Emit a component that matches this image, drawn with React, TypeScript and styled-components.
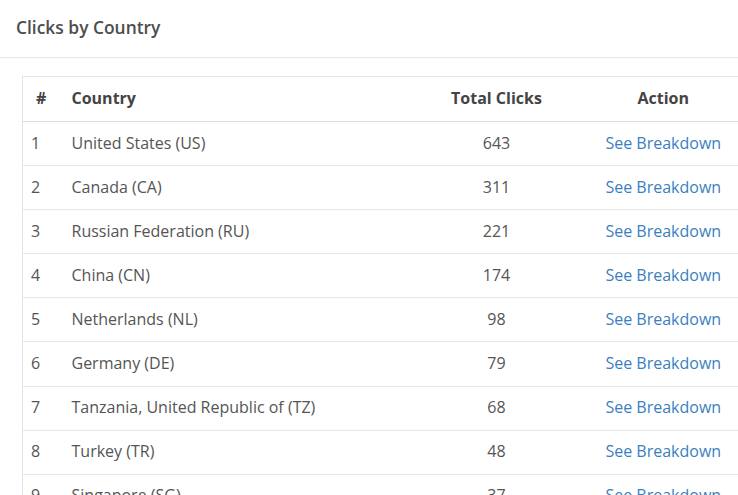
import React from "react";
import styled, { createGlobalStyle } from "styled-components";

const Global = createGlobalStyle`
  html, body { margin: 0; padding: 0; background: #fff; overflow: hidden; }
  body { font-family: "Open Sans", "Liberation Sans", sans-serif; color: #555; }
`;

const Panel = styled.div`
  width: 738px;
  height: 495px;
  overflow: hidden;
`;

const PanelHeader = styled.div`
  height: 58px;
  box-sizing: border-box;
  border-bottom: 1px solid #e6e6e6;
  padding: 0 16px;
  display: flex;
  align-items: center;
`;

const Title = styled.h3`
  margin: 0;
  font-size: 17.4px;
  font-weight: 600;
  color: #4d4d4d;
  padding-bottom: 4px;
`;

const Body = styled.div`
  padding: 18px 0 0 22px;
`;

const Table = styled.table`
  width: 732px;
  border-collapse: collapse;
  border: 1px solid #e4e4e4;
  font-size: 16px;
  table-layout: fixed;
`;

const Th = styled.th<{ $align?: string; $first?: boolean }>`
  text-align: ${(p) => p.$align || "left"};
  font-weight: 700;
  color: #444;
  height: 45px;
  padding: 0 8px 3px ${(p) => (p.$first ? "13px" : "8px")};
  border-bottom: 1px solid #ddd;
  box-sizing: border-box;
`;

const Td = styled.td<{ $align?: string }>`
  text-align: ${(p) => p.$align || "left"};
  height: 41.1px;
  padding: 0 8px 2px 8px;
  border-top: 1px solid #e6e6e6;
  color: #555;
  white-space: nowrap;
`;

const Link = styled.a`
  color: #3a7fc1;
  text-decoration: none;
`;

const rows: [string, number][] = [
  ["United States (US)", 643],
  ["Canada (CA)", 311],
  ["Russian Federation (RU)", 221],
  ["China (CN)", 174],
  ["Netherlands (NL)", 98],
  ["Germany (DE)", 79],
  ["Tanzania, United Republic of (TZ)", 68],
  ["Turkey (TR)", 48],
  ["Singapore (SG)", 37],
];

export default function App() {
  return (
    <Panel>
      <Global />
      <PanelHeader>
        <Title>Clicks by Country</Title>
      </PanelHeader>
      <Body>
        <Table>
          <colgroup>
            <col style={{ width: 41 }} />
            <col style={{ width: 357 }} />
            <col style={{ width: 152 }} />
            <col style={{ width: 182 }} />
          </colgroup>
          <thead>
            <tr>
              <Th $first>#</Th>
              <Th>Country</Th>
              <Th $align="center">Total Clicks</Th>
              <Th $align="center">Action</Th>
            </tr>
          </thead>
          <tbody>
            {rows.map(([c, n], i) => (
              <tr key={c}>
                <Td>{i + 1}</Td>
                <Td>{c}</Td>
                <Td $align="center">{n}</Td>
                <Td $align="center">
                  <Link href="#">See Breakdown</Link>
                </Td>
              </tr>
            ))}
          </tbody>
        </Table>
      </Body>
    </Panel>
  );
}
